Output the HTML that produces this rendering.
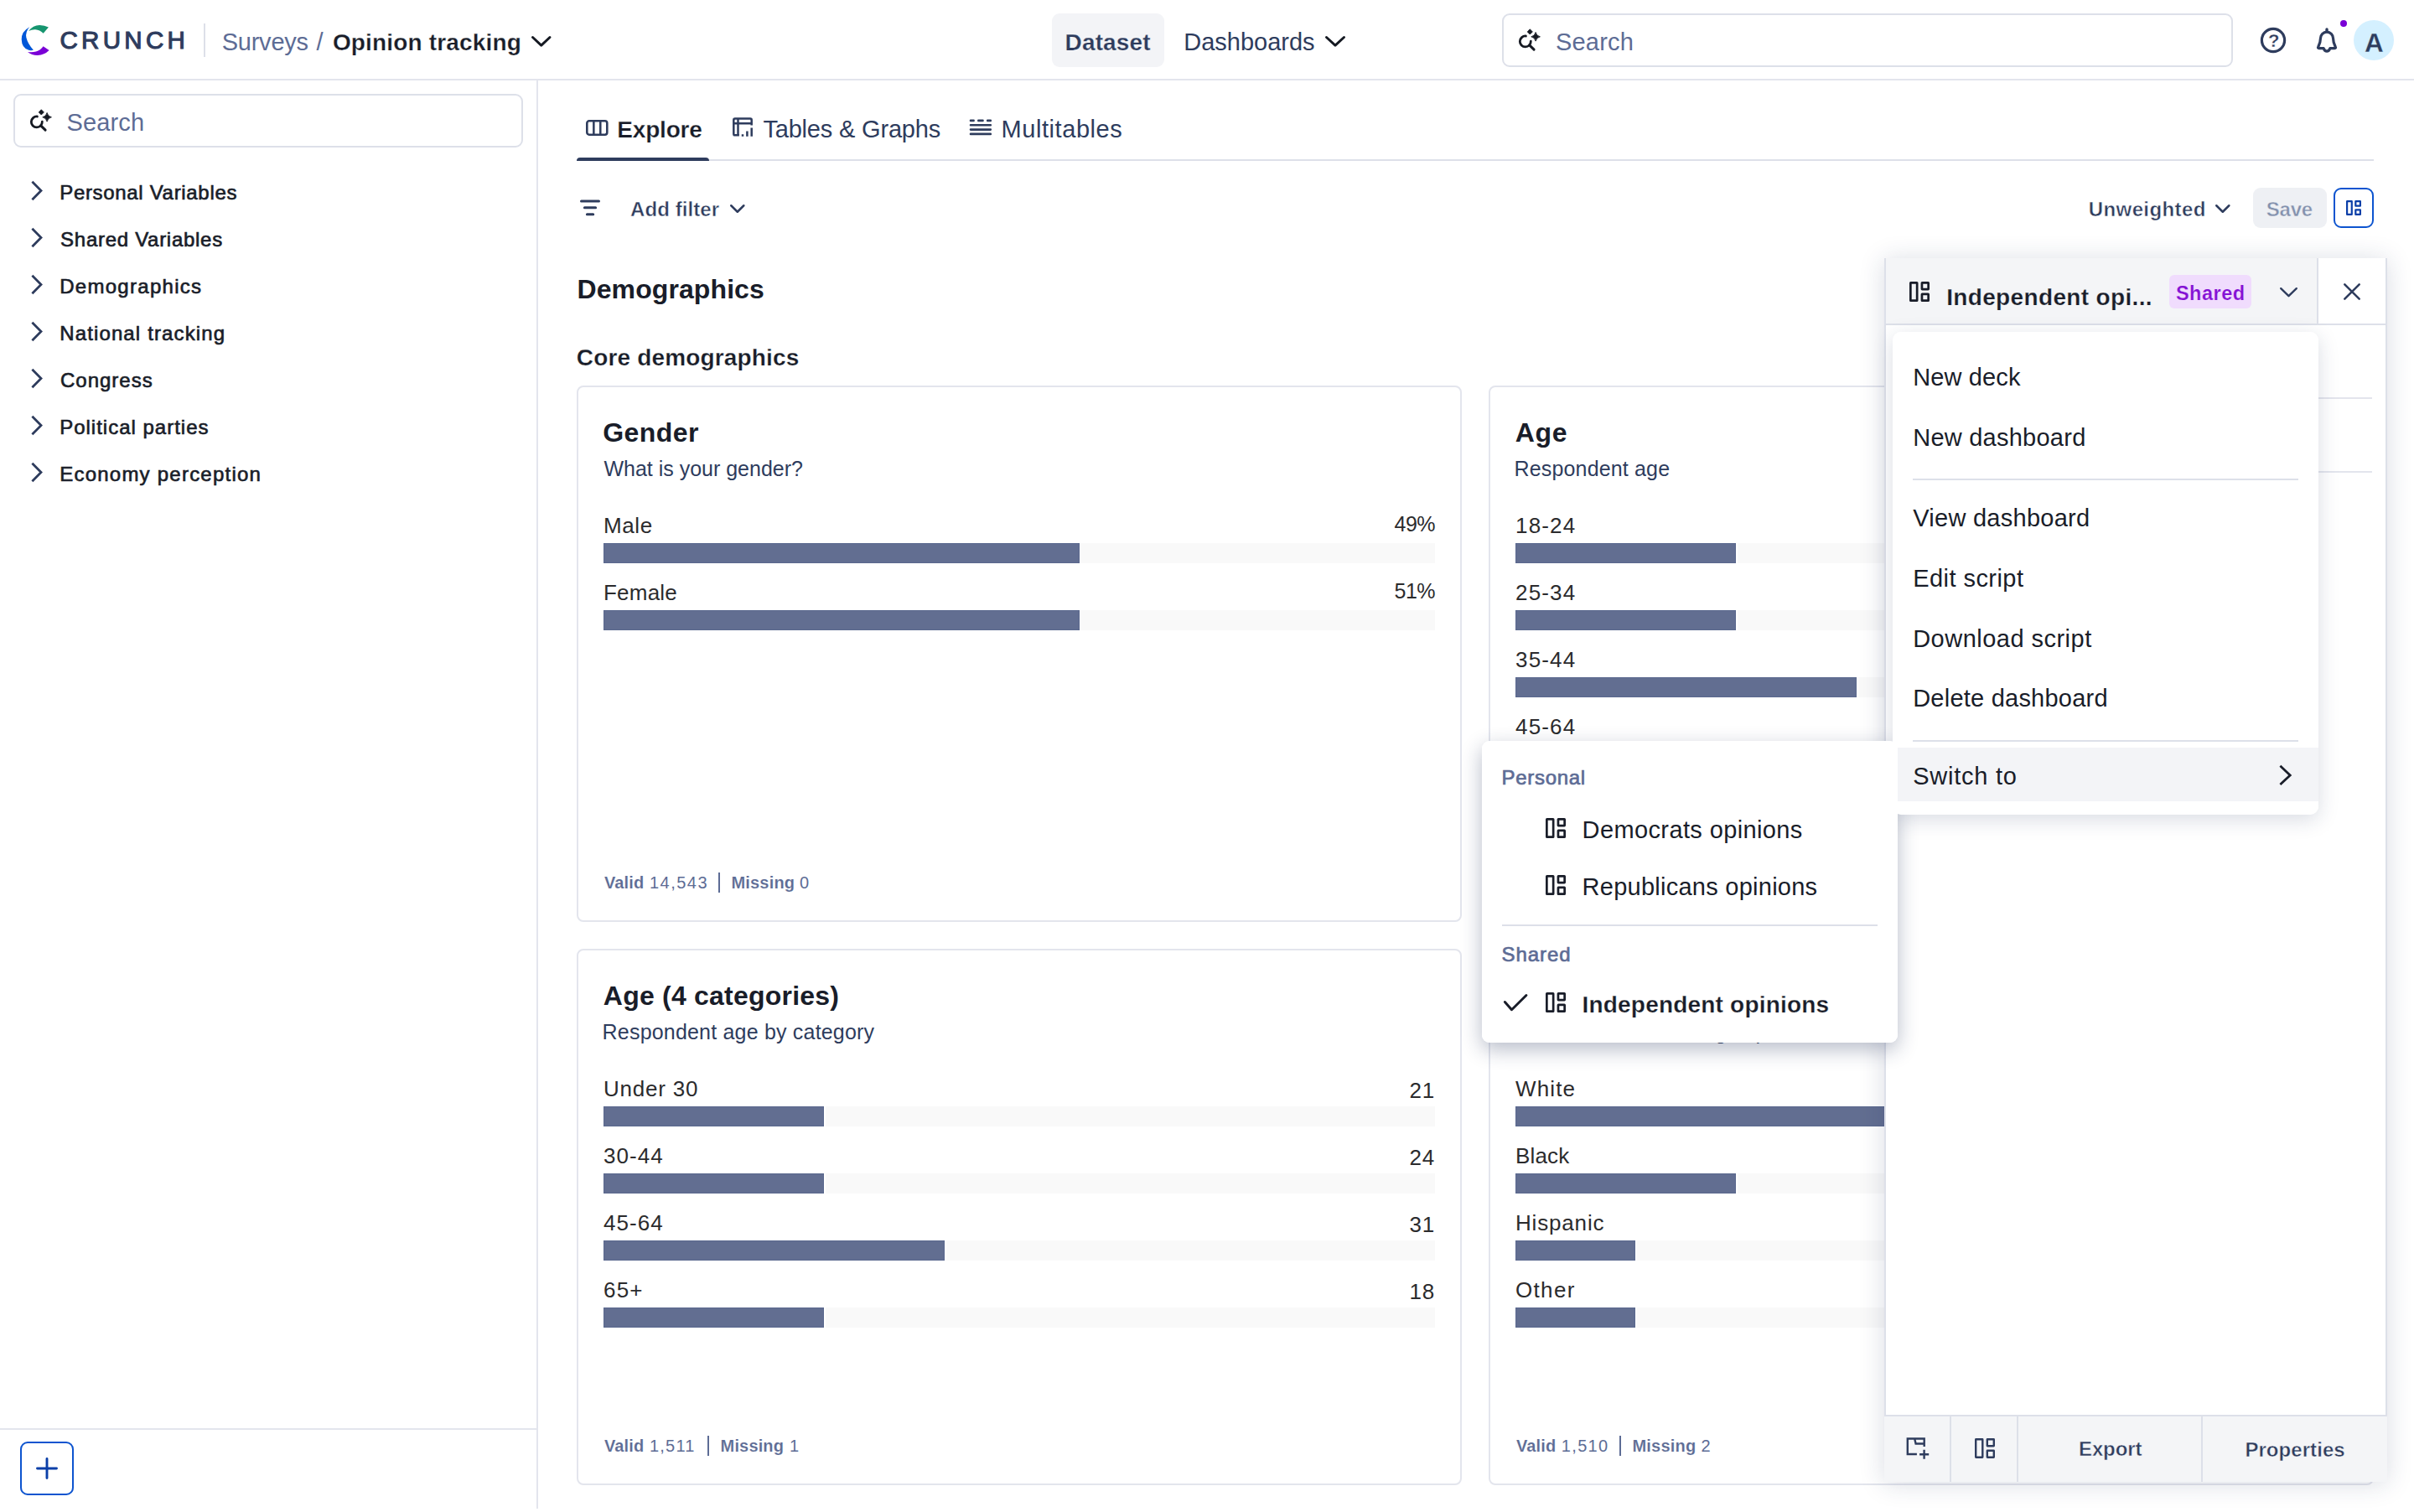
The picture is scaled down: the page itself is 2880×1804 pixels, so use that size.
<!DOCTYPE html>
<html lang="en">
<head>
<meta charset="utf-8">
<title>Crunch – Opinion tracking</title>
<style>
*{box-sizing:border-box;margin:0;padding:0}
html,body{width:2880px;height:1804px;overflow:hidden;background:#fff}
body{font-family:"Liberation Sans",sans-serif;color:#191d29;position:relative}
.abs{position:absolute}
.t{position:absolute;white-space:nowrap;line-height:1}
svg{position:absolute;overflow:visible}
.card{position:absolute;border:2px solid #e3e5ed;border-radius:8px;background:#fff}
.trk{position:absolute;height:24px;background:#f9f9f9}
.bar{position:absolute;height:24px;background:#626e91;border:1px solid #5a688e}
/* if rendered at 1440x902 CSS px with 2x device scale, shrink the 2880px layout to fit */
@media (max-width:1600px){html{zoom:.5}}
</style>
</head>
<body>
<!-- ===== HEADER ===== -->
<header>
<div class="abs" style="left:0px;top:0px;width:2880px;height:96px;border-bottom:2px solid #e3e5ed;background:#fff"></div>
<svg style="left:0px;top:0px" width="96" height="96" viewBox="0 0 96 96" fill="none"><path d="M34.1,36.9 Q39.5,30 47,29.9 Q53,29.8 57.9,32.6 L51.7,39.7 Q47.5,35.6 42.2,35.2 Q38,35 34.1,36.9 Z" fill="#16956f"/><path d="M35.2,32.2 Q25.6,37.5 25.7,46.9 Q26,57.3 34.3,59.8 Q37,60.5 39.9,59.7 Q33.3,52.5 31.4,45 Q30,38 35.2,32.2 Z" fill="#0057d8"/><path d="M33,61.9 Q38,66 44.8,65.9 Q53,65.6 58.6,59.9 L51.6,55.2 Q48.3,60 43,61.5 Q38,62.8 33,61.9 Z" fill="#7a00d6"/></svg>
<div class="t" style="left:71.5px;top:33px;font-size:29.5px;color:#2e3c5d;letter-spacing:4.308px;-webkit-text-stroke:1.1px #2e3c5d;">CRUNCH</div>
<div class="abs" style="left:243px;top:28px;width:2px;height:40px;background:#dde0e9"></div>
<div class="t" style="left:264.7px;top:36px;font-size:29px;color:#5d6c95;letter-spacing:-0.233px;">Surveys</div>
<div class="t" style="left:377.5px;top:36px;font-size:29px;color:#5d6c95;">/</div>
<div class="t" style="left:396.9px;top:37px;font-size:28px;color:#191d29;font-weight:700;letter-spacing:0.171px;-webkit-text-stroke:0.25px #fff;">Opinion tracking</div>
<svg style="left:633.5px;top:42.5px" width="23.5" height="12.6" viewBox="0 0 23.5 12.6" fill="none"><path d="M1.5,1.5 L11.75,11.1 L22.0,1.5" stroke="#151922" stroke-width="3" stroke-linecap="round" stroke-linejoin="round"/></svg>
<div class="abs" style="left:1255px;top:16px;width:134px;height:64px;background:#f3f4f7;border-radius:9px"></div>
<div class="t" style="left:1270.6px;top:37px;font-size:28px;color:#2e3c5d;font-weight:700;letter-spacing:0.137px;-webkit-text-stroke:0.25px #f3f4f7;">Dataset</div>
<div class="t" style="left:1412.2px;top:36px;font-size:29px;color:#2e3c5d;letter-spacing:0.006px;">Dashboards</div>
<svg style="left:1581px;top:42.5px" width="24" height="12.6" viewBox="0 0 24 12.6" fill="none"><path d="M1.5,1.5 L12.0,11.1 L22.5,1.5" stroke="#151922" stroke-width="3" stroke-linecap="round" stroke-linejoin="round"/></svg>
<div class="abs" style="left:1792px;top:16px;width:872px;height:64px;border:2px solid #dde0e9;border-radius:9px;background:#fff"></div>
<svg style="left:1792px;top:16px" width="64" height="64" viewBox="0 0 64 64" fill="none"><path d="M28.400000000000002,27.0 A6.5 6.5 0 1 0 34.3,33.1" stroke="#151922" stroke-width="2.8" stroke-linecap="round"/><path d="M32.7,37.9 L38.1,43.1" stroke="#151922" stroke-width="3" stroke-linecap="round"/><path d="M33.3,18.799999999999997 L36.4,21.9 L33.3,25.0 L30.199999999999996,21.9 Z" fill="#151922" stroke="#151922" stroke-width="0.8" stroke-linejoin="round"/><path d="M40.1,22.5 Q40.95,26.95 45.4,27.8 Q40.95,28.650000000000002 40.1,33.1 Q39.25,28.650000000000002 34.800000000000004,27.8 Q39.25,26.95 40.1,22.5 Z" fill="#151922" stroke="#151922" stroke-width="0.9" stroke-linejoin="round"/></svg>
<div class="t" style="left:1856.0px;top:36px;font-size:29px;color:#5d6c95;letter-spacing:0.198px;">Search</div>
<svg style="left:2690px;top:26px" width="44" height="44" viewBox="0 0 44 44" fill="none"><circle cx="22" cy="22" r="13.6" stroke="#2e3c5d" stroke-width="3.2"/></svg>
<div class="t" style="left:2706.0px;top:38px;font-size:22px;color:#2e3c5d;font-weight:700;-webkit-text-stroke:0.3px #fff;">?</div>
<svg style="left:0px;top:0px" width="2880" height="96" viewBox="0 0 2880 96" fill="none"><path d="M2776,34.9 V37" stroke="#2e3c5d" stroke-width="3.4" stroke-linecap="round"/><path d="M2772.1,57.6 H2766.7 Q2764.8,57.6 2765.8,55.8 Q2768.5,50.5 2768.5,45.6 A7.5 7.5 0 0 1 2783.5,45.6 Q2783.5,50.5 2786.2,55.8 Q2787.2,57.6 2785.3,57.6 H2779.9 Q2778.6,61.1 2776,61.1 Q2773.4,61.1 2772.1,57.6 Z" stroke="#2e3c5d" stroke-width="3.2" stroke-linejoin="round"/></svg>
<div class="abs" style="left:2791.8px;top:23.8px;width:8.2px;height:8.2px;background:#7a00d6;border-radius:50%"></div>
<div class="abs" style="left:2808px;top:24px;width:48px;height:48px;background:#d4f0ff;border-radius:50%"></div>
<div class="t" style="left:2821.1px;top:36px;font-size:31.5px;color:#2e3c5d;font-weight:700;-webkit-text-stroke:0.3px #d4f0ff;">A</div>
</header>
<!-- ===== SIDEBAR ===== -->
<aside>
<div class="abs" style="left:640px;top:96px;width:2px;height:1704px;background:#e3e5ed"></div>
<div class="abs" style="left:16px;top:112px;width:608px;height:64px;border:2px solid #dde0e9;border-radius:9px;background:#fff"></div>
<svg style="left:16px;top:112px" width="64" height="64" viewBox="0 0 64 64" fill="none"><path d="M28.400000000000002,27.0 A6.5 6.5 0 1 0 34.3,33.1" stroke="#151922" stroke-width="2.8" stroke-linecap="round"/><path d="M32.7,37.9 L38.1,43.1" stroke="#151922" stroke-width="3" stroke-linecap="round"/><path d="M33.3,18.799999999999997 L36.4,21.9 L33.3,25.0 L30.199999999999996,21.9 Z" fill="#151922" stroke="#151922" stroke-width="0.8" stroke-linejoin="round"/><path d="M40.1,22.5 Q40.95,26.95 45.4,27.8 Q40.95,28.650000000000002 40.1,33.1 Q39.25,28.650000000000002 34.800000000000004,27.8 Q39.25,26.95 40.1,22.5 Z" fill="#151922" stroke="#151922" stroke-width="0.9" stroke-linejoin="round"/></svg>
<div class="t" style="left:79.4px;top:132px;font-size:29px;color:#5d6c95;letter-spacing:0.158px;">Search</div>
<svg style="left:37.3px;top:216.4px" width="13.4" height="23.2" viewBox="0 0 13.4 23.2" fill="none"><path d="M1.4,0.84 L12.0,11.6 L1.4,22.36" stroke="#2e3c5d" stroke-width="2.8" stroke-linecap="butt" stroke-linejoin="miter"/></svg>
<div class="t" style="left:71.2px;top:218px;font-size:24px;color:#191d29;letter-spacing:0.681px;-webkit-text-stroke:0.65px #191d29;">Personal Variables</div>
<svg style="left:37.3px;top:272.4px" width="13.4" height="23.2" viewBox="0 0 13.4 23.2" fill="none"><path d="M1.4,0.84 L12.0,11.6 L1.4,22.36" stroke="#2e3c5d" stroke-width="2.8" stroke-linecap="butt" stroke-linejoin="miter"/></svg>
<div class="t" style="left:72.1px;top:274px;font-size:24px;color:#191d29;letter-spacing:0.714px;-webkit-text-stroke:0.65px #191d29;">Shared Variables</div>
<svg style="left:37.3px;top:328.4px" width="13.4" height="23.2" viewBox="0 0 13.4 23.2" fill="none"><path d="M1.4,0.84 L12.0,11.6 L1.4,22.36" stroke="#2e3c5d" stroke-width="2.8" stroke-linecap="butt" stroke-linejoin="miter"/></svg>
<div class="t" style="left:71.2px;top:330px;font-size:24px;color:#191d29;letter-spacing:1.291px;-webkit-text-stroke:0.65px #191d29;">Demographics</div>
<svg style="left:37.3px;top:384.4px" width="13.4" height="23.2" viewBox="0 0 13.4 23.2" fill="none"><path d="M1.4,0.84 L12.0,11.6 L1.4,22.36" stroke="#2e3c5d" stroke-width="2.8" stroke-linecap="butt" stroke-linejoin="miter"/></svg>
<div class="t" style="left:71.2px;top:386px;font-size:24px;color:#191d29;letter-spacing:1.135px;-webkit-text-stroke:0.65px #191d29;">National tracking</div>
<svg style="left:37.3px;top:440.4px" width="13.4" height="23.2" viewBox="0 0 13.4 23.2" fill="none"><path d="M1.4,0.84 L12.0,11.6 L1.4,22.36" stroke="#2e3c5d" stroke-width="2.8" stroke-linecap="butt" stroke-linejoin="miter"/></svg>
<div class="t" style="left:72.0px;top:442px;font-size:24px;color:#191d29;letter-spacing:0.992px;-webkit-text-stroke:0.65px #191d29;">Congress</div>
<svg style="left:37.3px;top:496.4px" width="13.4" height="23.2" viewBox="0 0 13.4 23.2" fill="none"><path d="M1.4,0.84 L12.0,11.6 L1.4,22.36" stroke="#2e3c5d" stroke-width="2.8" stroke-linecap="butt" stroke-linejoin="miter"/></svg>
<div class="t" style="left:71.2px;top:498px;font-size:24px;color:#191d29;letter-spacing:0.996px;-webkit-text-stroke:0.65px #191d29;">Political parties</div>
<svg style="left:37.3px;top:552.4px" width="13.4" height="23.2" viewBox="0 0 13.4 23.2" fill="none"><path d="M1.4,0.84 L12.0,11.6 L1.4,22.36" stroke="#2e3c5d" stroke-width="2.8" stroke-linecap="butt" stroke-linejoin="miter"/></svg>
<div class="t" style="left:71.2px;top:554px;font-size:24px;color:#191d29;letter-spacing:1.231px;-webkit-text-stroke:0.65px #191d29;">Economy perception</div>
<div class="abs" style="left:0px;top:1704px;width:640px;height:2px;background:#e3e5ed"></div>
<div class="abs" style="left:24px;top:1720px;width:64px;height:64px;border:2px solid #0d54cf;border-radius:9px;background:#fff"></div>
<svg style="left:24px;top:1720px" width="64" height="64" viewBox="0 0 64 64" fill="none"><path d="M20.5,32 H43.5 M32,20.5 V43.5" stroke="#0a3fa8" stroke-width="2.9" stroke-linecap="round"/></svg>
</aside>
<!-- ===== MAIN ===== -->
<main>
<div class="abs" style="left:688px;top:190px;width:2144px;height:2px;background:#dde0e9"></div>
<div class="abs" style="left:688px;top:188px;width:158px;height:4px;background:#2e3c5d;border-radius:4px 4px 0 0"></div>
<svg style="left:698.7px;top:142.5px" width="26.6" height="19" viewBox="0 0 26.6 19" fill="none"><rect x="1.3" y="1.3" width="24" height="16.4" rx="2.6" stroke="#2e3c5d" stroke-width="2.6"/><path d="M9.35,1.3 V17.7 M17.3,1.3 V17.7" stroke="#2e3c5d" stroke-width="2.5"/></svg>
<div class="t" style="left:736.3px;top:141px;font-size:28px;color:#191d29;font-weight:700;letter-spacing:-0.184px;-webkit-text-stroke:0.25px #fff;">Explore</div>
<svg style="left:0px;top:0px" width="2880" height="200" viewBox="0 0 2880 200" fill="none"><g stroke="#2e3c5d" stroke-width="2.5" stroke-linecap="butt" stroke-linejoin="round"><path d="M881.9,161.3 H876.9 Q875.3,161.3 875.3,159.7 V143.2 Q875.3,141.6 876.9,141.6 H895.1 Q896.7,141.6 896.7,143.2 V149.6"/><path d="M875.3,147.2 H896.7 M880.5,141.6 V161.3"/><path d="M896.7,152.4 V162.7 M891.4,156.4 V162.7 M886,160.2 V162.7"/></g></svg>
<div class="t" style="left:910.4px;top:140px;font-size:29px;color:#2e3c5d;letter-spacing:-0.180px;">Tables &amp; Graphs</div>
<svg style="left:0px;top:0px" width="2880" height="200" viewBox="0 0 2880 200" fill="none"><g stroke="#2e3c5d" stroke-width="2.6" stroke-linecap="round"><path d="M1158,143.9 H1161.6 M1167.3,143.9 H1172.5 M1178.2,143.9 H1181.8"/><path d="M1158,149.3 H1181.8 M1158,154.6 H1181.8 M1158,159.9 H1181.8"/></g></svg>
<div class="t" style="left:1194.6px;top:140px;font-size:29px;color:#2e3c5d;letter-spacing:0.560px;">Multitables</div>
<svg style="left:0px;top:0px" width="2880" height="300" viewBox="0 0 2880 300" fill="none"><g stroke="#2e3c5d" stroke-width="3" stroke-linecap="round"><path d="M693.5,240 H714.5 M697.4,247.8 H710.6 M700.4,255.7 H707.7"/></g></svg>
<div class="t" style="left:752.1px;top:238px;font-size:24px;color:#2e3c5d;font-weight:700;letter-spacing:0.064px;-webkit-text-stroke:0.45px #fff;">Add filter</div>
<svg style="left:871.3px;top:243.6px" width="17.6" height="10" viewBox="0 0 17.6 10" fill="none"><path d="M1.25,1.25 L8.8,8.75 L16.35,1.25" stroke="#2e3c5d" stroke-width="2.5" stroke-linecap="round" stroke-linejoin="round"/></svg>
<div class="t" style="left:2491.8px;top:238px;font-size:24px;color:#2e3c5d;font-weight:700;letter-spacing:0.391px;-webkit-text-stroke:0.45px #fff;">Unweighted</div>
<svg style="left:2643.4px;top:243.6px" width="17.6" height="10" viewBox="0 0 17.6 10" fill="none"><path d="M1.25,1.25 L8.8,8.75 L16.35,1.25" stroke="#2e3c5d" stroke-width="2.5" stroke-linecap="round" stroke-linejoin="round"/></svg>
<div class="abs" style="left:2688px;top:224px;width:88px;height:48px;background:#eef0f4;border-radius:9px"></div>
<div class="t" style="left:2703.8px;top:238px;font-size:24px;color:#8391ad;font-weight:700;letter-spacing:-0.251px;-webkit-text-stroke:0.45px #eef0f4;">Save</div>
<div class="abs" style="left:2784px;top:224px;width:48px;height:48px;border:2px solid #0d54cf;border-radius:9px;background:#fff"></div>
<svg style="left:2799.3px;top:239.4px" width="18" height="18" viewBox="0 0 24 24" fill="none"><g stroke="#0a3fa8" stroke-width="2.93" stroke-linejoin="miter"><rect x="1.47" y="1.47" width="7.57" height="21.07" rx="0.25"/><rect x="15.07" y="1.47" width="7.47" height="7.47" rx="0.25"/><rect x="15.07" y="15.07" width="7.47" height="7.47" rx="0.25"/></g></svg>
<div class="t" style="left:688.5px;top:329px;font-size:32px;color:#191d29;font-weight:700;letter-spacing:0.093px;">Demographics</div>
<div class="t" style="left:687.8px;top:413px;font-size:28px;color:#191d29;font-weight:700;letter-spacing:0.164px;-webkit-text-stroke:0.25px #fff;">Core demographics</div>
<div class="card" style="left:688px;top:460px;width:1056px;height:640px"></div>
<div class="t" style="left:719.3px;top:500px;font-size:32px;color:#191d29;font-weight:700;letter-spacing:0.426px;">Gender</div>
<div class="t" style="left:720.5px;top:547px;font-size:25px;color:#2e3c5d;letter-spacing:-0.012px;">What is your gender?</div>
<div class="t" style="left:720.0px;top:614px;font-size:26px;color:#2b2b2d;letter-spacing:0.601px;">Male</div>
<div class="t" style="left:1663.5px;top:613px;font-size:25px;color:#2b2b2d;letter-spacing:-0.5px">49%</div>
<div class="trk" style="left:1289.4px;top:648px;width:422.6px"></div><div class="bar" style="left:720px;top:648px;width:568px"></div>
<div class="t" style="left:720.0px;top:694px;font-size:26px;color:#2b2b2d;letter-spacing:0.212px;">Female</div>
<div class="t" style="left:1663.5px;top:693px;font-size:25px;color:#2b2b2d;letter-spacing:-0.5px">51%</div>
<div class="trk" style="left:1289.4px;top:728px;width:422.6px"></div><div class="bar" style="left:720px;top:728px;width:568px"></div>
<div class="t" style="left:720.9px;top:1043px;font-size:20px;color:#5d6c95;font-weight:700;letter-spacing:0.135px;-webkit-text-stroke:0.12px #fff;">Valid</div>
<div class="t" style="left:774.9px;top:1043px;font-size:20px;color:#5d6c95;letter-spacing:1.504px;">14,543</div>
<div class="abs" style="left:857.3px;top:1041px;width:2px;height:24px;background:#5d6c95"></div>
<div class="t" style="left:872.4px;top:1043px;font-size:20px;color:#5d6c95;font-weight:700;letter-spacing:0.200px;-webkit-text-stroke:0.12px #fff;">Missing</div>
<div class="t" style="left:954.0px;top:1043px;font-size:20px;color:#5d6c95;">0</div>
<div class="card" style="left:1776px;top:460px;width:1056px;height:640px"></div>
<div class="t" style="left:1807.8px;top:500px;font-size:32px;color:#191d29;font-weight:700;letter-spacing:0.604px;">Age</div>
<div class="t" style="left:1806.5px;top:547px;font-size:25px;color:#2e3c5d;letter-spacing:0.160px;">Respondent age</div>
<div class="t" style="left:1808.0px;top:614px;font-size:26px;color:#2b2b2d;letter-spacing:1.168px;">18-24</div>
<div class="trk" style="left:2072.6px;top:648px;width:727.4px"></div><div class="bar" style="left:1808px;top:648px;width:263.2px"></div>
<div class="t" style="left:1808.0px;top:694px;font-size:26px;color:#2b2b2d;letter-spacing:1.168px;">25-34</div>
<div class="trk" style="left:2072.6px;top:728px;width:727.4px"></div><div class="bar" style="left:1808px;top:728px;width:263.2px"></div>
<div class="t" style="left:1808.0px;top:774px;font-size:26px;color:#2b2b2d;letter-spacing:1.168px;">35-44</div>
<div class="trk" style="left:2216.7px;top:808px;width:583.3px"></div><div class="bar" style="left:1808px;top:808px;width:407.3px"></div>
<div class="t" style="left:1808.0px;top:854px;font-size:26px;color:#2b2b2d;letter-spacing:1.168px;">45-64</div>
<div class="trk" style="left:2072.6px;top:888px;width:727.4px"></div><div class="bar" style="left:1808px;top:888px;width:263.2px"></div>
<div class="t" style="left:1808.9px;top:1043px;font-size:20px;color:#5d6c95;font-weight:700;letter-spacing:0.135px;-webkit-text-stroke:0.12px #fff;">Valid</div>
<div class="t" style="left:1862.8px;top:1043px;font-size:20px;color:#5d6c95;letter-spacing:1.335px;">1,510</div>
<div class="abs" style="left:1932.1px;top:1041px;width:2px;height:24px;background:#5d6c95"></div>
<div class="t" style="left:1947.5px;top:1043px;font-size:20px;color:#5d6c95;font-weight:700;letter-spacing:0.200px;-webkit-text-stroke:0.12px #fff;">Missing</div>
<div class="t" style="left:2029.5px;top:1043px;font-size:20px;color:#5d6c95;">2</div>
<div class="card" style="left:688px;top:1132px;width:1056px;height:640px"></div>
<div class="t" style="left:719.8px;top:1172px;font-size:32px;color:#191d29;font-weight:700;letter-spacing:0.219px;">Age (4 categories)</div>
<div class="t" style="left:718.6px;top:1219px;font-size:25px;color:#2e3c5d;letter-spacing:0.193px;">Respondent age by category</div>
<div class="t" style="left:720.0px;top:1286px;font-size:26px;color:#2b2b2d;letter-spacing:0.789px;">Under 30</div>
<div class="t" style="left:1681.5px;top:1288px;font-size:26px;color:#2b2b2d;letter-spacing:0.8px">21</div>
<div class="trk" style="left:984.6px;top:1320px;width:727.4px"></div><div class="bar" style="left:720px;top:1320px;width:263.2px"></div>
<div class="t" style="left:720.0px;top:1366px;font-size:26px;color:#2b2b2d;letter-spacing:1.043px;">30-44</div>
<div class="t" style="left:1681.5px;top:1368px;font-size:26px;color:#2b2b2d;letter-spacing:0.8px">24</div>
<div class="trk" style="left:984.6px;top:1400px;width:727.4px"></div><div class="bar" style="left:720px;top:1400px;width:263.2px"></div>
<div class="t" style="left:720.0px;top:1446px;font-size:26px;color:#2b2b2d;letter-spacing:1.043px;">45-64</div>
<div class="t" style="left:1681.5px;top:1448px;font-size:26px;color:#2b2b2d;letter-spacing:0.8px">31</div>
<div class="trk" style="left:1128.7px;top:1480px;width:583.3px"></div><div class="bar" style="left:720px;top:1480px;width:407.3px"></div>
<div class="t" style="left:720.0px;top:1526px;font-size:26px;color:#2b2b2d;letter-spacing:1.189px;">65+</div>
<div class="t" style="left:1681.5px;top:1528px;font-size:26px;color:#2b2b2d;letter-spacing:0.8px">18</div>
<div class="trk" style="left:984.6px;top:1560px;width:727.4px"></div><div class="bar" style="left:720px;top:1560px;width:263.2px"></div>
<div class="t" style="left:720.9px;top:1715px;font-size:20px;color:#5d6c95;font-weight:700;letter-spacing:0.135px;-webkit-text-stroke:0.12px #fff;">Valid</div>
<div class="t" style="left:774.9px;top:1715px;font-size:20px;color:#5d6c95;letter-spacing:1.230px;">1,511</div>
<div class="abs" style="left:844.3px;top:1713px;width:2px;height:24px;background:#5d6c95"></div>
<div class="t" style="left:859.6px;top:1715px;font-size:20px;color:#5d6c95;font-weight:700;letter-spacing:0.150px;-webkit-text-stroke:0.12px #fff;">Missing</div>
<div class="t" style="left:942.1px;top:1715px;font-size:20px;color:#5d6c95;">1</div>
<div class="card" style="left:1776px;top:1132px;width:1056px;height:640px"></div>
<div class="t" style="left:1806.5px;top:1172px;font-size:32px;color:#191d29;font-weight:700;">Race</div>
<div class="t" style="left:1806.5px;top:1219px;font-size:25px;color:#2e3c5d;letter-spacing:-0.360px;">Racial and ethnic sub-group</div>
<div class="t" style="left:1808.0px;top:1286px;font-size:26px;color:#2b2b2d;letter-spacing:1.147px;">White</div>
<div class="trk" style="left:2569.4px;top:1320px;width:230.6px"></div><div class="bar" style="left:1808px;top:1320px;width:760px"></div>
<div class="t" style="left:1808.0px;top:1366px;font-size:26px;color:#2b2b2d;letter-spacing:0.144px;">Black</div>
<div class="trk" style="left:2072.6px;top:1400px;width:727.4px"></div><div class="bar" style="left:1808px;top:1400px;width:263.2px"></div>
<div class="t" style="left:1808.0px;top:1446px;font-size:26px;color:#2b2b2d;letter-spacing:0.824px;">Hispanic</div>
<div class="trk" style="left:1952.7px;top:1480px;width:847.3px"></div><div class="bar" style="left:1808px;top:1480px;width:143.3px"></div>
<div class="t" style="left:1808.0px;top:1526px;font-size:26px;color:#2b2b2d;letter-spacing:1.323px;">Other</div>
<div class="trk" style="left:1952.7px;top:1560px;width:847.3px"></div><div class="bar" style="left:1808px;top:1560px;width:143.3px"></div>
<div class="t" style="left:1808.9px;top:1715px;font-size:20px;color:#5d6c95;font-weight:700;letter-spacing:0.135px;-webkit-text-stroke:0.12px #fff;">Valid</div>
<div class="t" style="left:1862.8px;top:1715px;font-size:20px;color:#5d6c95;letter-spacing:1.335px;">1,510</div>
<div class="abs" style="left:1932.1px;top:1713px;width:2px;height:24px;background:#5d6c95"></div>
<div class="t" style="left:1947.5px;top:1715px;font-size:20px;color:#5d6c95;font-weight:700;letter-spacing:0.200px;-webkit-text-stroke:0.12px #fff;">Missing</div>
<div class="t" style="left:2029.5px;top:1715px;font-size:20px;color:#5d6c95;">2</div>
</main>
<!-- ===== DASHBOARD PANEL + MENUS ===== -->
<section>
<div class="abs" style="left:2248px;top:308px;width:600px;height:1460px;background:#fff;border-left:2px solid #dde0e9;border-right:2px solid #dde0e9;box-shadow:0 2px 28px rgba(30,47,88,.17)"></div>
<div class="abs" style="left:2250px;top:308px;width:514px;height:78px;background:#f4f5f7"></div>
<div class="abs" style="left:2250px;top:386px;width:596px;height:2px;background:#dde0e9"></div>
<div class="abs" style="left:2764px;top:308px;width:2px;height:78px;background:#dde0e9"></div>
<svg style="left:2277.8px;top:336px" width="24" height="24" viewBox="0 0 24 24" fill="none"><g stroke="#191d29" stroke-width="2.70" stroke-linejoin="miter"><rect x="1.35" y="1.35" width="7.80" height="21.30" rx="0.25"/><rect x="14.95" y="1.35" width="7.70" height="7.70" rx="0.25"/><rect x="14.95" y="14.95" width="7.70" height="7.70" rx="0.25"/></g></svg>
<div class="t" style="left:2322.2px;top:341px;font-size:28px;color:#191d29;font-weight:700;letter-spacing:0.344px;-webkit-text-stroke:0.25px #f4f5f7;">Independent opi...</div>
<div class="abs" style="left:2588px;top:328px;width:98px;height:40px;background:#f0dcfd;border-radius:6px"></div>
<div class="t" style="left:2595.9px;top:339px;font-size:23.5px;color:#8412d4;font-weight:700;letter-spacing:0.509px;-webkit-text-stroke:0.2px #f0dcfd;">Shared</div>
<svg style="left:2719.6px;top:342.6px" width="21" height="11.4" viewBox="0 0 21 11.4" fill="none"><path d="M1.2,1.2 L10.5,10.200000000000001 L19.8,1.2" stroke="#2e3c5d" stroke-width="2.4" stroke-linecap="round" stroke-linejoin="round"/></svg>
<svg style="left:2796px;top:338px" width="20" height="20" viewBox="0 0 20 20" fill="none"><path d="M1.3,1.3 L18.7,18.7 M18.7,1.3 L1.3,18.7" stroke="#2e3c5d" stroke-width="2.6" stroke-linecap="round"/></svg>
<div class="abs" style="left:2266px;top:474px;width:564px;height:2px;background:#e3e5ed"></div>
<div class="abs" style="left:2266px;top:562px;width:564px;height:2px;background:#e3e5ed"></div>
<div class="abs" style="left:2248px;top:1688px;width:600px;height:2px;background:#dde0e9"></div>
<div class="abs" style="left:2248px;top:1690px;width:600px;height:78px;background:#f4f5f7"></div>
<div class="abs" style="left:2326px;top:1690px;width:2px;height:78px;background:#dde0e9"></div>
<div class="abs" style="left:2406px;top:1690px;width:2px;height:78px;background:#dde0e9"></div>
<div class="abs" style="left:2626px;top:1690px;width:2px;height:78px;background:#dde0e9"></div>
<svg style="left:0px;top:0px" width="2880" height="1804" viewBox="0 0 2880 1804" fill="none"><g stroke="#2e3c5d" stroke-width="2.4" stroke-linejoin="miter"><path d="M2286.9,1735 H2275.8 V1716.5 H2295.7 V1726"/><path d="M2284.3,1717 L2285.6,1722.5 H2295"/><path d="M2290.1,1735.2 H2301.2 M2295.6,1729.8 V1740.7"/></g></svg>
<svg style="left:2355.9px;top:1716px" width="24" height="24" viewBox="0 0 24 24" fill="none"><g stroke="#2e3c5d" stroke-width="2.40" stroke-linejoin="miter"><rect x="1.20" y="1.20" width="8.10" height="21.60" rx="0.25"/><rect x="14.80" y="1.20" width="8.00" height="8.00" rx="0.25"/><rect x="14.80" y="14.80" width="8.00" height="8.00" rx="0.25"/></g></svg>
<div class="t" style="left:2480.0px;top:1717px;font-size:24px;color:#2e3c5d;font-weight:700;letter-spacing:-0.127px;-webkit-text-stroke:0.45px #f4f5f7;">Export</div>
<div class="t" style="left:2678.4px;top:1718px;font-size:24px;color:#2e3c5d;font-weight:700;letter-spacing:0.060px;-webkit-text-stroke:0.45px #f4f5f7;">Properties</div>
<div class="abs" style="left:2258px;top:396px;width:508px;height:576px;border-radius:10px;box-shadow:0 6px 24px rgba(30,47,88,.17)"></div>
<div class="abs" style="left:1768px;top:884px;width:496px;height:360px;border-radius:9px;box-shadow:0 8px 24px rgba(30,47,88,.32)"></div>
<div class="abs" style="left:2258px;top:396px;width:508px;height:576px;background:#fff;border-radius:10px"></div>
<div class="abs" style="left:2264px;top:892px;width:502px;height:64px;background:#f3f4f7"></div>
<div class="t" style="left:2282.2px;top:436px;font-size:29px;color:#191d29;letter-spacing:0.143px;">New deck</div>
<div class="t" style="left:2282.2px;top:508px;font-size:29px;color:#191d29;letter-spacing:0.245px;">New dashboard</div>
<div class="t" style="left:2282.2px;top:604px;font-size:29px;color:#191d29;letter-spacing:0.271px;">View dashboard</div>
<div class="t" style="left:2282.2px;top:676px;font-size:29px;color:#191d29;letter-spacing:0.449px;">Edit script</div>
<div class="t" style="left:2282.2px;top:748px;font-size:29px;color:#191d29;letter-spacing:0.478px;">Download script</div>
<div class="t" style="left:2282.2px;top:819px;font-size:29px;color:#191d29;letter-spacing:0.229px;">Delete dashboard</div>
<div class="t" style="left:2282.2px;top:912px;font-size:29px;color:#191d29;letter-spacing:0.767px;">Switch to</div>
<div class="abs" style="left:2282px;top:570.5px;width:460px;height:2px;background:#dde0e9"></div>
<div class="abs" style="left:2282px;top:882.5px;width:460px;height:2px;background:#dde0e9"></div>
<svg style="left:2718.8px;top:912.8px" width="14.6" height="23.8" viewBox="0 0 14.6 23.8" fill="none"><path d="M1.4,0.84 L13.2,11.9 L1.4,22.96" stroke="#191d29" stroke-width="2.8" stroke-linecap="butt" stroke-linejoin="miter"/></svg>
<div class="abs" style="left:1768px;top:884px;width:496px;height:360px;background:#fff;border-radius:9px"></div>
<div class="t" style="left:1791.6px;top:916px;font-size:24px;color:#5d6c95;letter-spacing:0.689px;-webkit-text-stroke:0.7px #5d6c95;">Personal</div>
<svg style="left:1844px;top:976px" width="24" height="24" viewBox="0 0 24 24" fill="none"><g stroke="#191d29" stroke-width="2.70" stroke-linejoin="miter"><rect x="1.35" y="1.35" width="7.80" height="21.30" rx="0.25"/><rect x="14.95" y="1.35" width="7.70" height="7.70" rx="0.25"/><rect x="14.95" y="14.95" width="7.70" height="7.70" rx="0.25"/></g></svg>
<div class="t" style="left:1887.6px;top:976px;font-size:29px;color:#191d29;letter-spacing:0.379px;">Democrats opinions</div>
<svg style="left:1844px;top:1044px" width="24" height="24" viewBox="0 0 24 24" fill="none"><g stroke="#191d29" stroke-width="2.70" stroke-linejoin="miter"><rect x="1.35" y="1.35" width="7.80" height="21.30" rx="0.25"/><rect x="14.95" y="1.35" width="7.70" height="7.70" rx="0.25"/><rect x="14.95" y="14.95" width="7.70" height="7.70" rx="0.25"/></g></svg>
<div class="t" style="left:1887.6px;top:1044px;font-size:29px;color:#191d29;letter-spacing:0.255px;">Republicans opinions</div>
<div class="abs" style="left:1792px;top:1103px;width:448px;height:2px;background:#dde0e9"></div>
<div class="t" style="left:1791.4px;top:1127px;font-size:24px;color:#5d6c95;letter-spacing:0.988px;-webkit-text-stroke:0.7px #5d6c95;">Shared</div>
<svg style="left:1794px;top:1186px" width="29" height="21" viewBox="0 0 29 21" fill="none"><path d="M1.4,9.5 L9.5,18.7 L26.9,1.5" stroke="#191d29" stroke-width="3" stroke-linecap="round" stroke-linejoin="round"/></svg>
<svg style="left:1844px;top:1184.4px" width="24" height="24" viewBox="0 0 24 24" fill="none"><g stroke="#191d29" stroke-width="2.70" stroke-linejoin="miter"><rect x="1.35" y="1.35" width="7.80" height="21.30" rx="0.25"/><rect x="14.95" y="1.35" width="7.70" height="7.70" rx="0.25"/><rect x="14.95" y="14.95" width="7.70" height="7.70" rx="0.25"/></g></svg>
<div class="t" style="left:1887.5px;top:1185px;font-size:28px;color:#191d29;font-weight:700;letter-spacing:0.200px;-webkit-text-stroke:0.25px #fff;">Independent opinions</div>
</section>
</body>
</html>
